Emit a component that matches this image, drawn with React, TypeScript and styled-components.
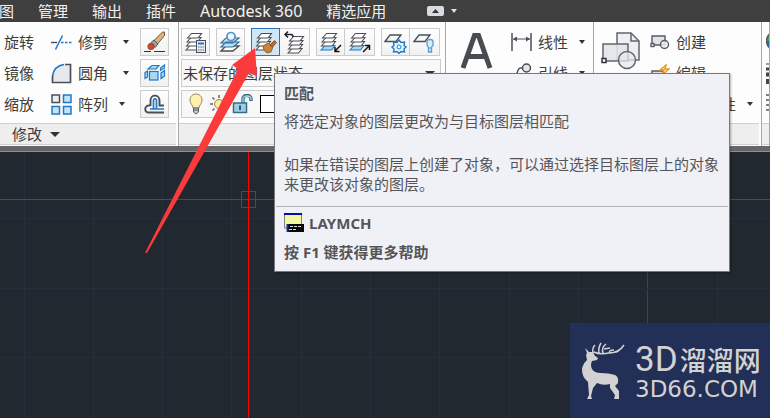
import React from "react";
import styled, { createGlobalStyle } from "styled-components";

const uiFont = `"Noto Sans", "Noto Sans CJK SC", sans-serif`;

const Global = createGlobalStyle`
  * { box-sizing: border-box; }
  html, body { margin: 0; height: 100%; overflow: hidden; }
  body { font-family: ${uiFont}; font-size: 15px; line-height: 20px; color: #3c3c3c; }
  button, select, input { font: inherit; color: inherit; margin: 0; }
  svg { display: block; flex: none; }
`;

const Page = styled.div`
  position: relative;
  display: flex;
  flex-direction: column;
  height: 100vh;
  min-width: 770px;
  overflow: hidden;
  background: #222830;
`;

const MenuBar = styled.nav`
  display: flex;
  align-items: center;
  gap: 24px;
  height: 22px;
  flex: none;
  background: #3f3f3f;
  color: #f2f2f2;
  white-space: nowrap;
  & > button:first-child { margin-left: -1px; }
`;

const MenuItem = styled.button<{ $latin?: boolean }>`
  border: 0;
  padding: 0;
  background: none;
  font-size: ${(p) => (p.$latin ? 16 : 15)}px;
`;

const MenuTools = styled.div`
  display: flex;
  align-items: center;
  gap: 7px;
  margin-left: 17px;
`;

const Ribbon = styled.div`
  display: flex;
  flex: none;
  background: #fdfdfd;
  border-bottom: 1px solid #8f8f8f;
  box-shadow: inset 0 -5px 0 #666666;
  padding-bottom: 5px;
`;

const Panel = styled.section<{ $basis: number; $grow?: boolean }>`
  flex: ${(p) => (p.$grow ? "1 0" : "0 0")} ${(p) => p.$basis}px;
  display: flex;
  flex-direction: column;
  min-width: 0;
  padding-right: 2px;
  border-right: 1px solid #a8a8a8;
  overflow: hidden;
  white-space: nowrap;
`;

const PanelBody = styled.div<{ $inset?: number }>`
  display: flex;
  height: 101px;
  padding: 6px 0 0 ${(p) => p.$inset || 0}px;
`;

const PanelTitle = styled.button`
  display: flex;
  align-items: center;
  gap: 8px;
  height: 22px;
  margin: 0 0 1px;
  border: 0;
  border-top: 1px solid #cfcfcf;
  border-bottom: 1px solid #cfcfcf;
  padding: 0 12px;
  background: #eeeeee;
`;

const Column = styled.div<{ $width?: number }>`
  display: flex;
  flex-direction: column;
  gap: 3px;
  flex: none;
  width: ${(p) => (p.$width ? `${p.$width}px` : "auto")};
`;

const Command = styled.button`
  display: flex;
  align-items: center;
  gap: 6px;
  height: 28px;
  border: 0;
  padding: 0;
  background: none;
  text-align: left;
`;

const Split = styled.div<{ $gap: number }>`
  display: flex;
  align-items: center;
  gap: ${(p) => p.$gap}px;
`;

const Drop = styled.button`
  display: flex;
  border: 0;
  padding: 4px 0;
  background: none;
`;

const BigTool = styled.button`
  display: flex;
  align-items: flex-start;
  border: 0;
  padding: 4px 0 0;
  background: none;
`;

const IconTool = styled.button<{ $active?: boolean }>`
  display: flex;
  align-items: center;
  justify-content: center;
  width: 29px;
  height: 28px;
  border: 1px solid ${(p) => (p.$active ? "#2a72ba" : "#cccccc")};
  padding: 0;
  background: ${(p) => (p.$active ? "#cfe6f6" : "linear-gradient(#fefefe, #f1f1f1)")};
`;

const ToolRow = styled.div`
  display: flex;
  gap: 6px;
`;

const ToolPair = styled.div`
  display: flex;
  & > button + button { width: 30px; border-left-width: 0; }
`;

const StateBox = styled.label`
  display: flex;
  align-items: center;
  height: 28px;
  border: 1px solid #cccccc;
  padding-right: 5px;
  background: #f8f8f8;
`;

const StateSelect = styled.select`
  flex: 1;
  min-width: 0;
  appearance: none;
  border: 0;
  padding: 0 1px;
  background: transparent;
  outline: 0;
`;

const LayerBox = styled.button`
  display: flex;
  align-items: center;
  gap: 3px;
  height: 28px;
  border: 1px solid #cccccc;
  padding: 0 4px;
  background: #f8f8f8;
`;

const Swatch = styled.span`
  width: 17px;
  height: 18px;
  margin-left: 4px;
  border: 1px solid #000;
  background: #fff;
`;

const Canvas = styled.main`
  flex: 1;
  min-height: 0;
  background: #222830;
`;

const Tooltip = styled.aside`
  position: absolute;
  left: 274px;
  top: 73px;
  width: 456px;
  border: 1px solid #76797e;
  background: #f0f1f7;
  color: #555558;
  box-shadow: 1px 1px 2px rgba(0, 0, 0, 0.3);
`;

const TipText = styled.div`
  padding: 9px 8px 12px 9px;
`;

const TipTitle = styled.h1`
  margin: 0 0 8px;
  font-size: 15px;
  line-height: 20px;
  font-weight: 700;
`;

const TipParagraph = styled.p`
  margin: 0;
  line-height: 20px;
  & + & { margin-top: 23px; }
`;

const TipFooter = styled.div`
  display: flex;
  flex-direction: column;
  gap: 9px;
  margin: 0 1px;
  border-top: 1px solid #b4b5b9;
  padding: 6px 8px 9px;
  font-weight: 700;
`;

const TipCommand = styled.div`
  display: flex;
  align-items: center;
  gap: 5px;
`;

const Pointer = styled.svg`
  position: absolute;
  left: 140px;
  top: 44px;
  pointer-events: none;
`;

const Watermark = styled.div`
  position: absolute;
  right: 0;
  bottom: 0;
  display: flex;
  align-items: center;
  gap: 8px;
  width: 200px;
  height: 95px;
  padding-left: 11px;
  background: #222f56;
  color: #d2d2d2;
  white-space: nowrap;
`;

const BrandName = styled.div`
  display: flex;
  align-items: center;
  gap: 2px;
  height: 36px;
  font-family: "Noto Sans CJK SC", sans-serif;
  font-size: 27px;
  line-height: 36px;
  font-weight: 500;
`;

const BrandInitials = styled.span`
  font-family: Roboto, sans-serif;
  font-size: 35px;
  font-weight: 400;
`;

const BrandSite = styled.div`
  font-family: "DejaVu Sans", sans-serif;
  font-size: 23px;
  line-height: 22px;
  font-weight: 400;
`;

const Caret = ({ size = 6, color = "#333" }: { size?: number; color?: string }) => (
  <svg width={size} height={size > 6 ? 5 : 4} viewBox="0 0 6 4" preserveAspectRatio="none">
    <path d="M0 0H6L3 4Z" fill={color} />
  </svg>
);

const g = "#4b4f55";
const b = "#1f78c8";

const TrimIcon = () => (
  <svg width="21" height="21" viewBox="0 0 21 21" fill="none">
    <path d="M0 10.5H6" stroke={g} strokeWidth="1.4" />
    <path d="M4.5 17.5L11.5 3.5" stroke={b} strokeWidth="1.6" />
    <path d="M10 10.5H21" stroke={b} strokeWidth="1.4" strokeDasharray="2.5 1.5" />
  </svg>
);

const FilletIcon = () => (
  <svg width="21" height="21" viewBox="0 0 21 21" fill="none">
    <path d="M1.5 19.5V13Q3 3 13 1.5H19.5V19.5Z" fill="#e6e9ee" />
    <path d="M1.5 13V19.5H19.5V1.5H14" stroke={g} strokeWidth="1.7" />
    <path d="M1.5 13Q3 3 13 1.5" stroke={b} strokeWidth="1.7" />
  </svg>
);

const ArrayIcon = () => (
  <svg width="21" height="21" viewBox="0 0 21 21" strokeWidth="1.5">
    <rect x="1" y="1" width="7.5" height="7.5" fill="#eceef1" stroke={g} />
    <g fill="#c4e4f5" stroke={b}>
      <rect x="12.5" y="1" width="7.5" height="7.5" />
      <rect x="1" y="12.5" width="7.5" height="7.5" />
      <rect x="12.5" y="12.5" width="7.5" height="7.5" />
    </g>
  </svg>
);

const EraseIcon = () => (
  <svg width="22" height="22" viewBox="0 0 22 22" fill="none">
    <path d="M0 20.5H7M10 20.5H21" stroke="#333" />
    <path d="M10 9.5L18.5 1H20.5V4.5L13.5 13Z" fill="#dcb77c" stroke="#70542e" />
    <path d="M6.5 12L10 9L14 13L11 16.5Z" fill="#98a0a8" stroke="#555" />
    <circle cx="7" cy="15.5" r="3.2" fill="#cf4a22" stroke="#8b3a20" strokeWidth=".7" />
  </svg>
);

const ExplodeIcon = () => (
  <svg width="22" height="20" viewBox="0 0 22 20" fill="#a9d8f3" stroke={b} strokeWidth="1.2">
    <path d="M4 6L8 2.5H15L12 6Z" />
    <path d="M16.5 5L20.5 2V5L16.5 7.5Z" />
    <path d="M1 9.5L3.5 8V14L1 15.5Z" />
    <path d="M17 10L20.5 7.5V13L17 15.5Z" />
    <rect x="5.5" y="8.5" width="8.5" height="8.5" />
  </svg>
);

const OffsetIcon = () => (
  <svg width="22" height="20" viewBox="0 0 22 20" fill="none">
    <path d="M20 18.5H5C0 18.5 0 11.5 5 11.5L6.5 11V6.5C6.5 0 15.5 0 15.5 6.5V11.5H20" stroke={g} strokeWidth="1.9" />
    <path d="M20 15H6M9.5 15V7C9.5 4 12.5 4 12.5 7V15" stroke={b} strokeWidth="1.7" />
  </svg>
);

const Sheets = ({ blue }: { blue?: boolean }) => (
  <g fill="#fff" stroke={g} strokeWidth="1.1">
    <path d="M1 18L5 13.5H15L11.5 18Z" fill={blue ? "#a9d8f3" : "#fff"} stroke={blue ? b : g} />
    <path d="M1.5 14L5.5 9.5H15.5L12 14Z" />
    <path d="M2 10L6 5.5H16L12.5 10Z" />
    <path d="M2.5 6L6.5 1.5H16.5L13 6Z" />
  </g>
);

type LayerKind = "props" | "isolate" | "match" | "previous" | "walkIn" | "walkOut";

const LayerIcon = ({ kind }: { kind: LayerKind }) => (
  <svg width="23" height="23" viewBox="0 0 23 23" fill="none">
    {kind !== "isolate" && (
      <g transform={kind === "previous" ? "translate(4 4)" : "translate(1 1)"}>
        <Sheets blue={kind.startsWith("walk")} />
      </g>
    )}
    {kind === "props" && (
      <g>
        <rect x="12.5" y="9.5" width="9" height="12" fill="#e5edf3" stroke={g} />
        <path d="M14 12.5H20" stroke={b} strokeWidth="2" />
        <path d="M14 16H20M14 19H20" stroke="#667" strokeDasharray="1.5 .8" />
      </g>
    )}
    {kind === "isolate" && (
      <g>
        <path d="M2 20L7 15H20L14 20Z" fill="#fff" stroke={g} strokeWidth="1.3" />
        <path d="M2 16L7 11H20L14 16ZM2 12L7 7H20L14 12Z" fill="#b9dff3" stroke="#3b6f9a" strokeWidth="1.2" />
        <circle cx="12" cy="5.5" r="4" fill="#eef6fb" stroke="#4e93cd" strokeWidth="1.7" />
      </g>
    )}
    {kind === "match" && (
      <g>
        <path d="M9 15L14 12L19 16L17 21L13 22Q9 20 9 15Z" fill="#c9843c" stroke="#8b531e" strokeWidth=".8" />
        <path d="M16 14L20.5 9.5L22.5 11.5L18.5 16Z" fill="#b46e30" stroke="#754218" strokeWidth=".8" />
      </g>
    )}
    {kind === "previous" && (
      <path d="M2 3.5H8Q10 3.5 10 6M5 .5L2 3.5L5 6.5" stroke="#222" strokeWidth="1.5" />
    )}
    {kind === "walkIn" && <path d="M22 14L16 20M16 16V20.5H20.5" stroke="#111" strokeWidth="1.5" />}
    {kind === "walkOut" && <path d="M15 21L21 15M17 14.5H21.5V19" stroke="#111" strokeWidth="1.5" />}
  </svg>
);

const FreezeIcon = () => (
  <svg width="23" height="23" viewBox="0 0 23 23" fill="none">
    <path d="M1 10.5L6 4H17L12 10.5Z" fill="#f5f6f8" stroke={g} strokeWidth="1.3" />
    <path d="M15 9L17 11.5L20.5 11L20 14.5L22 16L20 18L20.5 21L17 20.5L15 22.5L13 20.5L9.5 21L10 18L8 16L10 14.5L9.5 11L13 11.5Z" fill="#e8f5fc" stroke={b} strokeWidth="1.4" />
    <circle cx="15" cy="16" r="2" fill="#fff" stroke={b} />
  </svg>
);

const LayerOffIcon = () => (
  <svg width="23" height="23" viewBox="0 0 23 23" fill="none">
    <path d="M1 10.5L6 4H17L12 10.5Z" fill="#f5f6f8" stroke={g} strokeWidth="1.3" />
    <path d="M15.5 16.5L14 14V10.5Q14 8.5 17 8.5Q20 8.5 20 10.5V14L18.5 16.5V21H15.5Z" fill="#d2edfb" stroke="#609ac9" strokeWidth="1.3" />
    <path d="M15.5 17H18.5" stroke="#609ac9" />
  </svg>
);

const BulbIcon = () => (
  <svg width="20" height="22" viewBox="0 0 20 22">
    <path d="M7 15C7 12 4 11 4 7C4-1 16-1 16 7C16 11 13 12 13 15Z" fill="#fff0ae" stroke="#9a8556" />
    <path d="M7.5 15H12.5V19L10 21L7.5 19Z" fill="#c9cbd0" stroke="#555b64" />
    <path d="M7.5 17H12.5" stroke="#555b64" />
  </svg>
);

const SunIcon = () => (
  <svg width="20" height="20" viewBox="0 0 20 20">
    <path d="M10 1V4M10 16V19M1 10H4M16 10H19M3.5 3.5L5.5 5.5M14.5 14.5L16.5 16.5M16.5 3.5L14.5 5.5M5.5 14.5L3.5 16.5" stroke="#6e6656" strokeWidth="1.5" />
    <circle cx="10" cy="10" r="4.5" fill="#ffe9a0" stroke="#96845a" />
  </svg>
);

const LockIcon = () => (
  <svg width="21" height="20" viewBox="0 0 21 20" fill="none">
    <path d="M11 9V5C11 0 19 0 19 5V7" stroke="#386d88" strokeWidth="3.4" />
    <path d="M11 9V5C11 1 19 1 19 5V6" stroke="#a9d6e8" strokeWidth="1.3" />
    <rect x="1.5" y="9" width="13" height="9.5" fill="#9acfe4" stroke="#386d88" strokeWidth="1.5" />
    <path d="M8 11.5V16" stroke="#285b78" strokeWidth="2" />
  </svg>
);

const TextIcon = () => (
  <svg width="33" height="37" viewBox="0 0 33 37" fill="none" stroke="#484b50" strokeWidth="5">
    <path d="M3 36L14.5 3.5H18.5L30 36M8 24.5H25" />
  </svg>
);

const LinearIcon = () => (
  <svg width="21" height="20" viewBox="0 0 21 20">
    <path d="M1 1V19M20 1V19" stroke={g} strokeWidth="1.5" />
    <path d="M2 7H19" stroke={g} />
    <path d="M2 7L6 4.5V9.5ZM19 7L15 4.5V9.5Z" fill={g} />
  </svg>
);

const LeaderIcon = () => (
  <svg width="21" height="20" viewBox="0 0 21 20" fill="none" stroke={g} strokeWidth="1.5">
    <circle cx="15.5" cy="5" r="4" fill="#e3e7ec" />
    <path d="M11.5 5H9Q6 7 6 12L2 18M2 18V13" />
  </svg>
);

const InsertIcon = () => (
  <svg width="40" height="39" viewBox="0 0 40 39" stroke="#62666d" strokeWidth="1.5">
    <path d="M16 1H30L38 9V28H16Z" fill="#edf0f3" />
    <path d="M30 1V9H38" fill="none" />
    <path d="M2 12H27V29H2Z" fill="#e1e4e9" fillOpacity=".9" />
    <circle cx="26" cy="28" r="8.5" fill="#e4e8ef" fillOpacity=".75" />
    <rect x="1" y="26.5" width="4" height="4" fill="#fff" stroke="#333" />
  </svg>
);

const CreateIcon = () => (
  <svg width="20" height="16" viewBox="0 0 20 16" stroke="#555a61" strokeWidth="1.4">
    <path d="M2 2H15V11H2Z" fill="#e1e4e9" />
    <circle cx="14.5" cy="10.5" r="4" fill="#f3f4f6" fillOpacity=".8" />
    <rect x="1" y="9.5" width="3" height="3" fill="#fff" />
  </svg>
);

const EditIcon = () => (
  <svg width="20" height="18" viewBox="0 0 20 18">
    <path d="M2 7H13V16H2Z" fill="#e1e4e9" stroke="#555a61" strokeWidth="1.4" />
    <path d="M16 1L10 6H14L12 11L19 5H15Z" fill="#fff29b" stroke="#e8962a" strokeWidth="1.4" />
  </svg>
);

const PropertiesIcon = () => (
  <svg width="20" height="86" viewBox="0 0 20 86">
    <circle cx="10" cy="13" r="9.5" fill="#52a653" stroke="#555" strokeWidth="1.5" />
    <path d="M.5 13H10L4 20Q1 18 .5 13Z" fill="#2563ba" />
    <path d="M0 36H20" stroke="#444" />
    <path d="M0 41H20" stroke="#444" strokeWidth="3" />
    <path d="M0 46.5H20" stroke="#444" strokeWidth="4" />
    <path d="M0 53.5H20" stroke="#444" strokeWidth="5" />
    <path d="M0 67H20M0 72H20M0 77H20M0 82H20" stroke="#555" strokeWidth="1.5" strokeDasharray="4 1" />
  </svg>
);

const CommandIcon = () => (
  <svg width="20" height="20" viewBox="0 0 20 20">
    <rect x=".5" y="1" width="17" height="14" fill="#f6f5a0" stroke="#808080" />
    <path d="M0 1H18" stroke="#0011ac" strokeWidth="2" />
    <rect x="3" y="11" width="17" height="8" fill="#080808" />
    <path d="M3.5 11V19" stroke="#102ca8" strokeWidth="2" />
    <path d="M6 13.5H17M5 16.5H13" stroke="#ddd" strokeDasharray="3 1" />
  </svg>
);

const DeerIcon = () => (
  <svg width="46" height="60" viewBox="0 0 46 60">
    <path d="M4 7L8 11L12 11L14 15L17 17L16 19L11 20Q9 24 11 28Q13 32 20 32Q28 32 34 34Q38 36 37 42L34 45L38 50V58H33L34 54L29 47V43Q22 45 16 42L12 47L10 55L11 58H6L8 54L7 41Q1 36 1 29Q1 24 6 19L5 14L6 12Z" fill="#d2d2d2" />
    <path d="M12 12Q11 7 14 4M13 11Q19 14 28 12Q38 12 43 4M18 12Q17 7 20 2M22 12Q20 7 25 3M23 8L29 7M29 12Q27 9 33 9M34 11Q37 11 39 8" fill="none" stroke="#d2d2d2" strokeWidth="1.5" />
  </svg>
);

const gridX = [24, 93, 162, 231, 301, 370, 439, 509, 578, 647, 717];
const gridY = [66, 136, 205];

const gridStroke = (x: number) => (x === 647 ? "#3a4250" : "#272e3a");

const Drawing = () => (
  <svg width="100%" height="100%" fill="none" shapeRendering="crispEdges">
    {gridX.map((x) => (
      <path key={x} d={`M${x}.5 0V2000`} stroke={gridStroke(x)} />
    ))}
    {gridY.map((y) => (
      <path key={y} d={`M0 ${y}.5H4000`} stroke="#272e3a" />
    ))}
    <path d="M0 47.5H4000M248.5 0V2000" stroke="#ff0000" />
    <rect x="241.5" y="39.5" width="14" height="16" stroke="#ff0000" />
  </svg>
);

const menus = [
  { label: "图" },
  { label: "管理" },
  { label: "输出" },
  { label: "插件" },
  { label: "Autodesk 360", latin: true },
  { label: "精选应用" },
];

export default function App() {
  return (
    <Page>
      <Global />
      <MenuBar>
        {menus.map((m) => (
          <MenuItem key={m.label} $latin={m.latin}>{m.label}</MenuItem>
        ))}
        <MenuTools>
          <MenuItem aria-label="最小化功能区">
            <svg width="17" height="10" viewBox="0 0 17 10">
              <rect width="17" height="10" rx="2" fill="#d9dbe2" />
              <path d="M5 7L8.5 3L12 7Z" fill="#333" />
            </svg>
          </MenuItem>
          <Drop aria-label="功能区选项"><Caret color="#dde0ee" /></Drop>
        </MenuTools>
      </MenuBar>

      <Ribbon>
        <Panel $basis={179}>
          <PanelBody $inset={4}>
            <Column $width={47}>
              <Command>旋转</Command>
              <Command>镜像</Command>
              <Command>缩放</Command>
            </Column>
            <Column $width={89}>
              <Split $gap={15}><Command><TrimIcon />修剪</Command><Drop aria-label="修剪选项"><Caret /></Drop></Split>
              <Split $gap={15}><Command><FilletIcon />圆角</Command><Drop aria-label="圆角选项"><Caret /></Drop></Split>
              <Split $gap={11}><Command><ArrayIcon />阵列</Command><Drop aria-label="阵列选项"><Caret /></Drop></Split>
            </Column>
            <Column>
              <IconTool aria-label="删除"><EraseIcon /></IconTool>
              <IconTool aria-label="分解"><ExplodeIcon /></IconTool>
              <IconTool aria-label="偏移"><OffsetIcon /></IconTool>
            </Column>
          </PanelBody>
          <PanelTitle>修改 <Caret size={10} /></PanelTitle>
        </Panel>

        <Panel $basis={267}>
          <PanelBody $inset={2}>
            <Column $width={260}>
              <ToolRow>
                <IconTool aria-label="图层特性"><LayerIcon kind="props" /></IconTool>
                <IconTool aria-label="隔离"><LayerIcon kind="isolate" /></IconTool>
                <ToolPair>
                  <IconTool aria-label="匹配" $active><LayerIcon kind="match" /></IconTool>
                  <IconTool aria-label="上一个"><LayerIcon kind="previous" /></IconTool>
                </ToolPair>
                <ToolPair>
                  <IconTool aria-label="置为当前"><LayerIcon kind="walkIn" /></IconTool>
                  <IconTool aria-label="取消隔离"><LayerIcon kind="walkOut" /></IconTool>
                </ToolPair>
                <ToolPair>
                  <IconTool aria-label="冻结"><FreezeIcon /></IconTool>
                  <IconTool aria-label="关闭"><LayerOffIcon /></IconTool>
                </ToolPair>
              </ToolRow>
              <StateBox>
                <StateSelect aria-label="图层状态">
                  <option>未保存的图层状态</option>
                </StateSelect>
                <Caret size={10} />
              </StateBox>
              <LayerBox aria-label="图层">
                <BulbIcon /><SunIcon /><LockIcon /><Swatch />
              </LayerBox>
            </Column>
          </PanelBody>
          <PanelTitle aria-label="图层" />
        </Panel>

        <Panel $basis={148}>
          <PanelBody $inset={14}>
            <Column $width={51}>
              <BigTool aria-label="文字"><TextIcon /></BigTool>
            </Column>
            <Column>
              <Split $gap={11}><Command><LinearIcon />线性</Command><Drop aria-label="线性选项"><Caret /></Drop></Split>
              <Split $gap={11}><Command><LeaderIcon />引线</Command><Drop aria-label="引线选项"><Caret /></Drop></Split>
            </Column>
          </PanelBody>
          <PanelTitle aria-label="注释" />
        </Panel>

        <Panel $basis={168}>
          <PanelBody $inset={7}>
            <Column $width={49}>
              <BigTool aria-label="插入"><InsertIcon /></BigTool>
            </Column>
            <Column>
              <Command><CreateIcon />创建</Command>
              <Command><EditIcon />编辑</Command>
              <Split $gap={11}><Command><EditIcon />编辑属性</Command><Drop aria-label="编辑属性选项"><Caret /></Drop></Split>
            </Column>
          </PanelBody>
          <PanelTitle aria-label="块" />
        </Panel>

        <Panel $basis={7} $grow>
          <PanelBody $inset={4}><PropertiesIcon /></PanelBody>
          <PanelTitle aria-label="特性" />
        </Panel>
      </Ribbon>

      <Canvas><Drawing /></Canvas>

      <Tooltip role="tooltip">
        <TipText>
          <TipTitle>匹配</TipTitle>
          <TipParagraph>将选定对象的图层更改为与目标图层相匹配</TipParagraph>
          <TipParagraph>如果在错误的图层上创建了对象，可以通过选择目标图层上的对象来更改该对象的图层。</TipParagraph>
        </TipText>
        <TipFooter>
          <TipCommand><CommandIcon />LAYMCH</TipCommand>
          <div>按 F1 键获得更多帮助</div>
        </TipFooter>
      </Tooltip>

      <Pointer width="130" height="212" viewBox="0 0 130 212" aria-hidden="true">
        <path d="M5 209L98 25L92 21L115 4L117 32L109 29L7 209Z" fill="#fb3b3b" />
      </Pointer>

      <Watermark>
        <DeerIcon />
        <div>
          <BrandName><BrandInitials>3D</BrandInitials>溜溜网</BrandName>
          <BrandSite>3D66.COM</BrandSite>
        </div>
      </Watermark>
    </Page>
  );
}
